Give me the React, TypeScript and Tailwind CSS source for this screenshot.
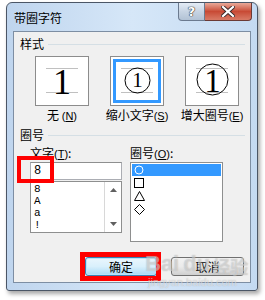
import React from "react";

const cjk = "font-['Noto_Sans_CJK_SC','Noto_Sans',sans-serif]";

function StyleBox({ kind, selected }: { kind: "none" | "small" | "big"; selected?: boolean }) {
  return (
    <div className="w-[54px] h-[50px] border border-[#8c8c8c] bg-white p-[2px]">
      <div
        className={
          "relative w-full h-full " +
          (selected ? "border-[3px] border-[#3399ff]" : "border-[3px] border-white")
        }
      >
        {/* guide lines */}
        <div className="absolute left-[5px] right-[5px] top-[6px] h-px bg-[#c0c0c0]" />
        <div className="absolute left-[5px] right-[5px] top-[30px] h-px bg-[#c0c0c0]" />
        {kind === "none" && (
          <div className="absolute inset-0 flex items-center justify-center font-['Liberation_Serif',serif] text-[36px] leading-none text-black pt-[2px]">
            1
          </div>
        )}
        {kind === "small" && (
          <>
            <svg className="absolute left-[8px] top-[5px]" width="27" height="27" viewBox="0 0 27 27">
              <circle cx="13.5" cy="13.5" r="12.5" fill="none" stroke="#000" strokeWidth="1" />
            </svg>
            <div className="absolute left-[8px] top-[5px] w-[27px] h-[27px] flex items-center justify-center font-['Liberation_Serif',serif] text-[21px] leading-none text-black">
              1
            </div>
          </>
        )}
        {kind === "big" && (
          <>
            <svg className="absolute left-[5px] top-[1px]" width="33" height="33" viewBox="0 0 33 33">
              <circle cx="16.5" cy="16.5" r="15.5" fill="none" stroke="#000" strokeWidth="1" />
            </svg>
            <div className="absolute left-[5px] top-[1px] w-[33px] h-[33px] flex items-center justify-center font-['Liberation_Serif',serif] text-[33px] leading-none text-black pt-[3px]">
              1
            </div>
          </>
        )}
      </div>
    </div>
  );
}

function GroupHead({ label }: { label: string }) {
  return (
    <div className="flex items-center h-[14px] pl-[6px] pr-[5px]">
      <span className="text-[12px] leading-none text-black">{label}</span>
      <div className="flex-1 h-px bg-[#d5dfe5] ml-[4px]" />
    </div>
  );
}

function Mn({ c }: { c: string }) {
  return (
    <span className="font-['Liberation_Sans',sans-serif] text-[11px]">
      (<span className="underline">{c}</span>)
    </span>
  );
}

export default function App() {
  return (
    <div className={"relative w-[265px] h-[300px] bg-white overflow-hidden pt-[2px] pl-[6px] " + cjk}>
      <div className="w-[252px] h-[289px] rounded-t-[6px] rounded-b-[3px] border border-[#4b5666] bg-gradient-to-r from-[#bfd5ee] via-[#d6e7f8] to-[#c4daf2] shadow-[2px_3px_4px_rgba(0,0,0,0.35)] flex flex-col">
        {/* title bar */}
        <div className="h-[28px] flex items-start">
          <span className="pl-[7px] pt-[9px] text-[12px] leading-none text-black">带圈字符</span>
          <div className="flex-1" />
          <div className="flex mr-[5px]">
            <div className="w-[27px] h-[18px] rounded-bl-[4px] border border-t-0 border-[#6b7a8f] bg-gradient-to-b from-[#e4ecf5] via-[#c7d4e3] to-[#b2c2d5] flex items-center justify-center">
              <span className="font-['DejaVu_Sans',sans-serif] font-bold text-[13px] leading-none text-white [text-shadow:0_0_1px_#333,0_0_1px_#333,0_0_1px_#333]">?</span>
            </div>
            <div className="w-[47px] h-[18px] rounded-br-[4px] border border-t-0 border-l-0 border-[#6b3a35] bg-gradient-to-b from-[#e8a898] via-[#c84a35] to-[#d87a66] flex items-center justify-center">
              <svg width="14" height="11" viewBox="0 0 14 11">
                <path d="M2 1 L12 10 M12 1 L2 10" stroke="#3a2a2a" strokeWidth="4" strokeLinecap="square" />
                <path d="M2 1 L12 10 M12 1 L2 10" stroke="#fff" strokeWidth="2.2" strokeLinecap="square" />
              </svg>
            </div>
          </div>
        </div>

        {/* client area */}
        <div className="mx-[6px] h-[252px] border border-[#7d8ea3] bg-[#f0f0f0] flex flex-col">
          <div className="mt-[5px]">
            <GroupHead label="样式" />
          </div>

          <div className="mt-[5px] flex pl-[21px] gap-[21px]">
            <div className="w-[54px] flex flex-col items-center">
              <StyleBox kind="none" />
              <div className="mt-[2px] h-[14px] text-[12px] leading-[14px] whitespace-nowrap">
                无 <Mn c="N" />
              </div>
            </div>
            <div className="w-[54px] flex flex-col items-center">
              <StyleBox kind="small" selected />
              <div className="mt-[2px] h-[14px] text-[12px] leading-[14px] whitespace-nowrap">
                缩小文字<Mn c="S" />
              </div>
            </div>
            <div className="w-[54px] flex flex-col items-center">
              <StyleBox kind="big" />
              <div className="mt-[2px] h-[14px] text-[12px] leading-[14px] whitespace-nowrap">
                增大圈号<Mn c="E" />
              </div>
            </div>
          </div>

          <div className="mt-[6px]">
            <GroupHead label="圈号" />
          </div>

          <div className="mt-[4px] flex pl-[16px] gap-[8px]">
            {/* text column */}
            <div className="w-[92px] flex flex-col">
              <div className="h-[14px] text-[12px] leading-[14px] whitespace-nowrap">
                文字<Mn c="T" />:
              </div>
              <div className="mt-[2px] h-[18px] border border-[#abadb3] border-t-[#8e8f8f] bg-white flex items-center pl-[3px] font-['Liberation_Mono',monospace] text-[12px] leading-none">
                8
              </div>
              <div className="mt-px h-[52px] border border-[#8e8f8f] bg-white flex">
                <div className="w-[73px] flex flex-col pl-[3px] pt-px font-['Liberation_Mono',monospace] text-[11px] leading-[12px] text-black">
                  <span>8</span>
                  <span>A</span>
                  <span>a</span>
                  <span>!</span>
                </div>
                <div className="flex-1 border-l border-[#d8d8d8] flex flex-col items-center justify-between py-[6px]">
                  <svg width="7" height="4" viewBox="0 0 7 4">
                    <path d="M0 4 L3.5 0 L7 4 Z" fill="#606060" />
                  </svg>
                  <svg width="7" height="4" viewBox="0 0 7 4">
                    <path d="M0 0 L3.5 4 L7 0 Z" fill="#606060" />
                  </svg>
                </div>
              </div>
            </div>

            {/* enclosure column */}
            <div className="w-[93px] flex flex-col">
              <div className="h-[14px] text-[12px] leading-[14px] whitespace-nowrap">
                圈号<Mn c="O" />:
              </div>
              <div className="mt-[2px] h-[80px] border border-[#8e8f8f] bg-white p-px flex flex-col">
                <div className="h-[12px] bg-[#3399ff] flex items-center pl-[2px]">
                  <svg width="10" height="10" viewBox="0 0 10 10">
                    <circle cx="5" cy="5" r="4" fill="none" stroke="#fff" strokeWidth="1" />
                  </svg>
                </div>
                <div className="h-[13px] flex items-center pl-[2px]">
                  <svg width="10" height="10" viewBox="0 0 10 10">
                    <rect x="0.5" y="0.5" width="9" height="9" fill="none" stroke="#000" strokeWidth="1" />
                  </svg>
                </div>
                <div className="h-[14px] flex items-center pl-[2px]">
                  <svg width="11" height="10" viewBox="0 0 11 10">
                    <path d="M5.5 0.5 L10.5 9.5 L0.5 9.5 Z" fill="none" stroke="#000" strokeWidth="1" />
                  </svg>
                </div>
                <div className="h-[13px] flex items-center pl-[2px]">
                  <svg width="11" height="11" viewBox="0 0 11 11">
                    <path d="M5.5 0.5 L10.5 5.5 L5.5 10.5 L0.5 5.5 Z" fill="none" stroke="#000" strokeWidth="1" />
                  </svg>
                </div>
              </div>
            </div>
          </div>

          {/* buttons */}
          <div className="mt-[15px] flex justify-end pr-[6px] gap-[14px]">
            <div className="w-[72px] h-[19px] rounded-[3px] border border-[#3c7fb1] bg-gradient-to-b from-[#eaf6fd] via-[#d9f0fc] to-[#a7d9f5] shadow-[inset_0_0_0_1px_#b8e3f8] flex items-center justify-center text-[12px] leading-none">
              确定
            </div>
            <div className="w-[73px] h-[19px] rounded-[3px] border border-[#707070] bg-gradient-to-b from-[#f2f2f2] via-[#ebebeb] to-[#cfcfcf] flex items-center justify-center text-[12px] leading-none">
              取消
            </div>
          </div>
        </div>
      </div>

      {/* red highlight marks */}
      <div className="absolute left-[17px] top-[156px] w-[37px] h-[27px] border-4 border-[#ff0000]" />
      <div className="absolute left-[80px] top-[252px] w-[81px] h-[29px] border-[5px] border-[#ff0000]" />

      {/* watermark */}
      <div className="absolute left-[145px] top-[253px] flex items-end text-[22px] leading-none font-['Liberation_Sans',sans-serif] font-bold text-white/40 [text-shadow:0_0_1px_rgba(120,120,120,0.5)]">
        <span>Bai</span>
        <span className="ml-[4px]">du</span>
        <span className={"ml-[2px] text-[18px] " + cjk}>经验</span>
      </div>
      <div className="absolute left-[148px] top-[277px] text-[11px] leading-none font-['Liberation_Sans',sans-serif] text-white/50 [text-shadow:0_0_1px_rgba(120,120,120,0.5)]">
        jingyan.baidu.com
      </div>
    </div>
  );
}
